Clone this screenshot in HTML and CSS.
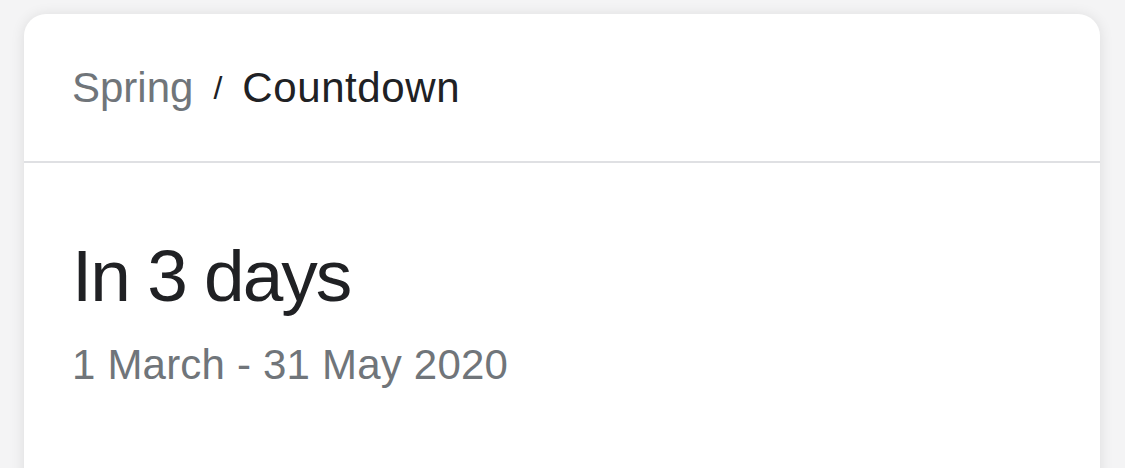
FILE: index.html
```html
<!DOCTYPE html>
<html lang="en">
<head>
<meta charset="UTF-8">
<title>Spring countdown</title>
<link rel="stylesheet" href="styles.css">
</head>
<body>

<div class="card">
    <div class="card-header">
        <span class="crumb">Spring</span><span class="crumb-sep">/</span><span class="crumb-current">Countdown</span>
    </div>

    <div class="card-body">
        <p class="countdown">In 3 days</p>
        <p class="date-range">1 March - 31 May 2020</p>
    </div>
</div>

</body>
</html>
```

FILE: styles.css
```css
html, body {
    height: 100%;
}

body {
    margin: 0;
    padding: 14px 25px 0 24px;
    box-sizing: border-box;
    background-color: #f4f4f5;
    font-family: 'Liberation Sans', Arial, sans-serif;
    overflow: hidden;
}

.card {
    background: #fff;
    border-radius: 22px;
    box-shadow: 0 1px 14px rgba(0, 0, 0, 0.10);
    min-height: 600px;
}

.card-header {
    padding: 49px 48px 48px 48px;
    font-size: 42px;
    line-height: 50px;
    white-space: nowrap;
    border-bottom: 2px solid #dfe0e3;
}

.crumb {
    color: #70757a;
}

.crumb-sep {
    font-size: 32px;
    color: #202124;
    margin: 0 20px;
    vertical-align: 3px;
}

.crumb-current {
    color: #202124;
    letter-spacing: 0.6px;
}

.card-body {
    padding: 73px 48px 0 48px;
}

.countdown {
    margin: 0;
    font-size: 73px;
    line-height: 80px;
    letter-spacing: -2px;
    color: #202124;
}

.date-range {
    margin: 24px 0 0;
    font-size: 42px;
    line-height: 50px;
    letter-spacing: 0.2px;
    color: #70757a;
}
```
